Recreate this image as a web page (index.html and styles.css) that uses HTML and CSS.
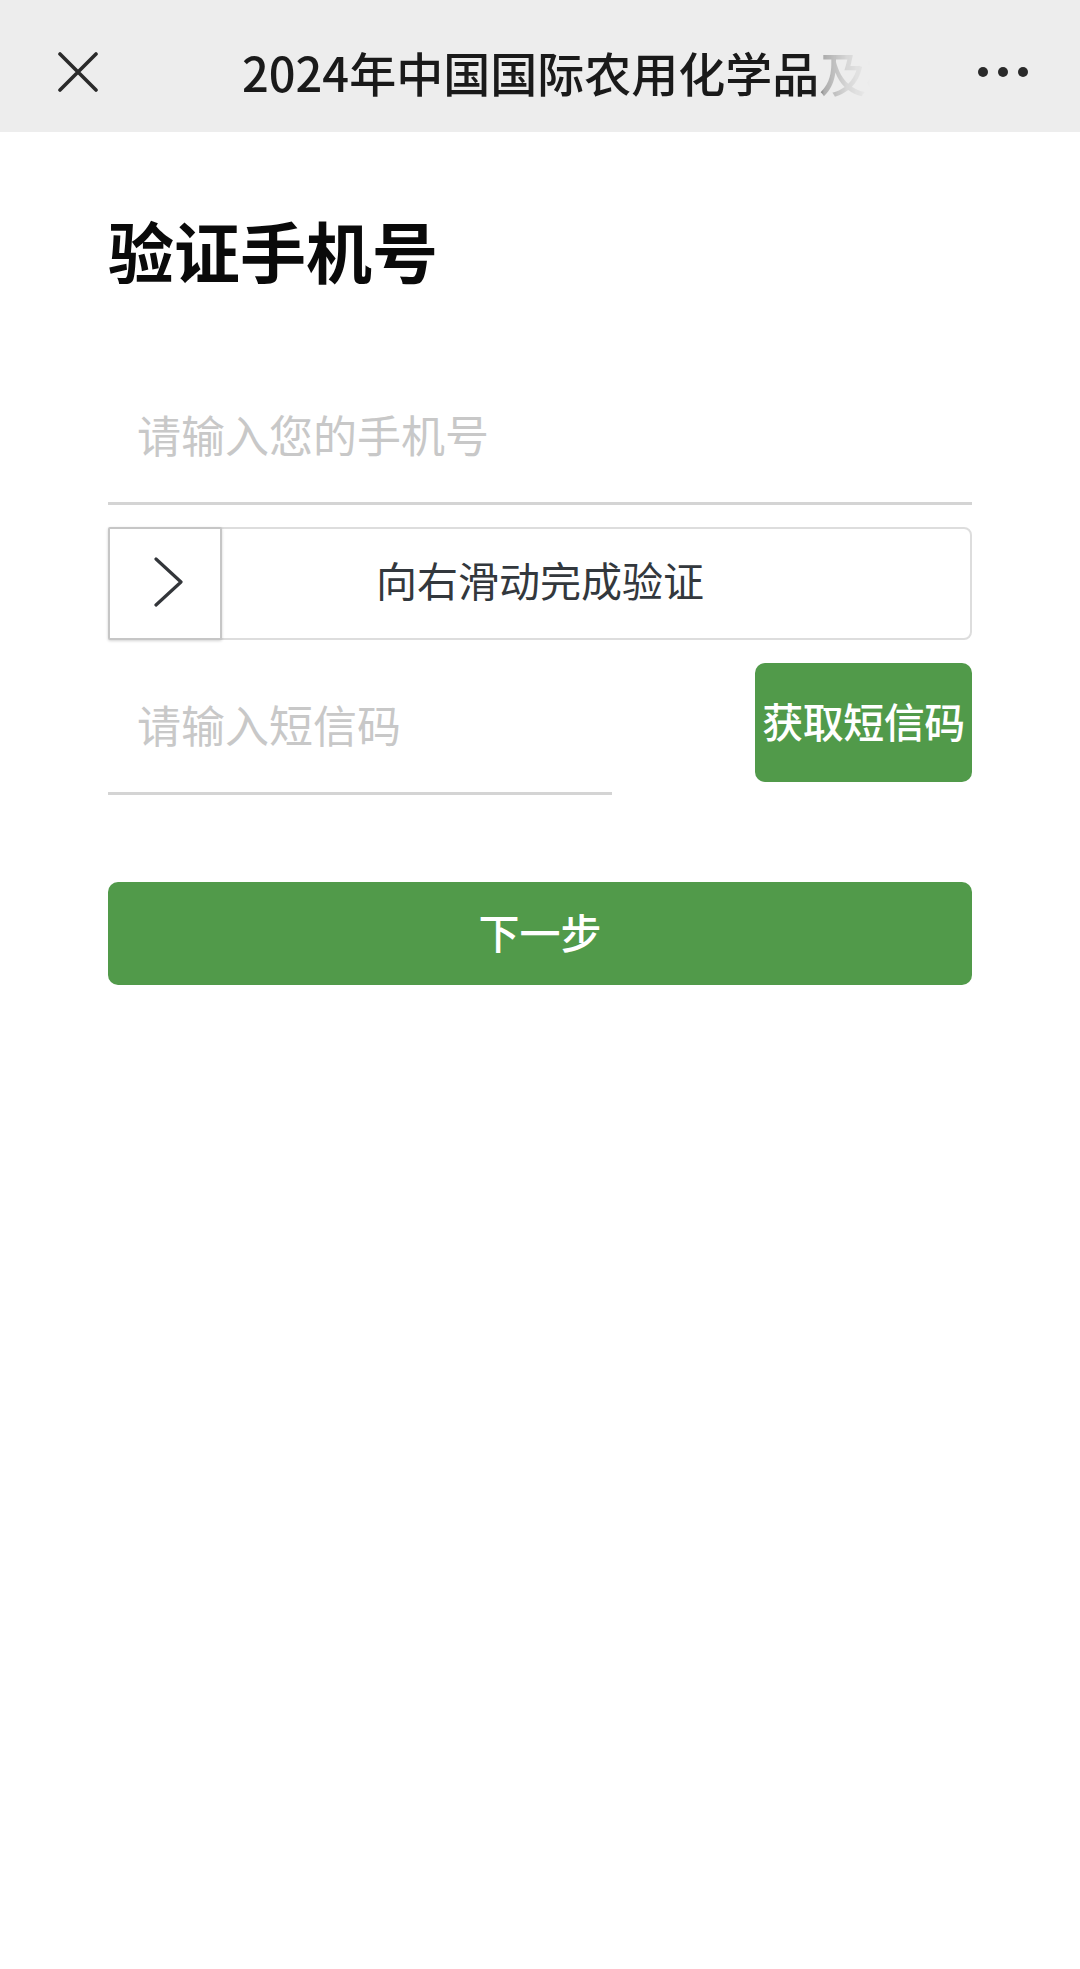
FILE: index.html
```html
<!DOCTYPE html>
<html lang="zh-CN">
<head>
<meta charset="utf-8">
<title>验证手机号</title>
<link rel="stylesheet" href="styles.css">
</head>
<body>
<header class="topbar">
  <div class="close">
    <svg width="40" height="40" viewBox="0 0 40 40"><path d="M2 2 L38 38 M38 2 L2 38" stroke="#2a2a2a" stroke-width="3.6" stroke-linecap="round" fill="none"/></svg>
  </div>
  <div class="title">2024年中国国际农用化学品及植保展览会</div>
  <div class="more"><span class="dot"></span><span class="dot"></span><span class="dot"></span></div>
</header>
<main class="content">
  <h1 class="heading">验证手机号</h1>
  <input class="field phone" type="tel" placeholder="请输入您的手机号">
  <div class="slider">
    <div class="handle">
      <svg width="30" height="50" viewBox="0 0 30 50"><path d="M2 2 L27 25 L2 48" stroke="#33363a" stroke-width="3.2" stroke-linecap="round" stroke-linejoin="round" fill="none"/></svg>
    </div>
    <div class="slider-text">向右滑动完成验证</div>
  </div>
  <div class="sms-row">
    <input class="field sms" type="text" placeholder="请输入短信码">
    <button class="btn code-btn" type="button">获取短信码</button>
  </div>
  <button class="btn next-btn" type="button">下一步</button>
</main>
</body>
</html>
```

FILE: styles.css
```css
* {
  box-sizing: border-box;
}

html, body {
  margin: 0;
  padding: 0;
  background: #ffffff;
}

body {
  width: 1080px;
  min-height: 1969px;
  font-family: "Noto Sans CJK SC", "Noto Sans", sans-serif;
  color: #111;
}

.topbar {
  height: 132px;
  padding-top: 12px;
  padding-left: 58px;
  padding-right: 52px;
  background: #ededed;
  display: flex;
  align-items: center;
}

.close {
  width: 40px;
  height: 40px;
  flex: none;
}

.close svg {
  display: block;
}

.title {
  margin-left: 144px;
  width: 628px;
  font-size: 47px;
  font-weight: 500;
  line-height: 60px;
  color: #1a1a1a;
  white-space: nowrap;
  overflow: hidden;
  -webkit-mask-image: linear-gradient(to right, #000 0, #000 572px, rgba(0,0,0,0.3) 582px, rgba(0,0,0,0.1) 605px, transparent 628px);
  mask-image: linear-gradient(to right, #000 0, #000 572px, rgba(0,0,0,0.3) 582px, rgba(0,0,0,0.1) 605px, transparent 628px);
}

.more {
  margin-left: auto;
  display: flex;
  gap: 10px;
}

.dot {
  width: 10px;
  height: 10px;
  border-radius: 50%;
  background: #2a2a2a;
}

.content {
  padding: 0 108px;
}

.heading {
  margin: 72px 0 0;
  font-size: 66px;
  font-weight: 700;
  line-height: 90px;
  color: #0a0a0a;
}

.field {
  display: block;
  height: 99px;
  margin: 0;
  padding: 0 0 40px 29px;
  border: none;
  border-bottom: 3px solid #d4d4d4;
  border-radius: 0;
  outline: none;
  background: transparent;
  font-family: inherit;
  font-size: 44px;
  line-height: 56px;
  color: #222;
}

.field::placeholder {
  color: #c8c8c8;
}

.phone {
  width: 100%;
  margin-top: 112px;
}

.slider {
  position: relative;
  margin-top: 22px;
  height: 113px;
  border: 2px solid #dddddd;
  border-radius: 8px;
  background: #fff;
}

.handle {
  position: absolute;
  left: -2px;
  top: -2px;
  width: 114px;
  height: 113px;
  border: 2px solid #c6c6c6;
  border-radius: 2px;
  background: #fff;
  box-shadow: 0 1px 3px rgba(0, 0, 0, 0.18);
  display: flex;
  align-items: center;
  justify-content: center;
  padding-left: 8px;
  padding-bottom: 4px;
}

.handle svg {
  display: block;
}

.slider-text {
  text-align: center;
  font-size: 41px;
  line-height: 101px;
  color: #33383d;
}

.sms-row {
  margin-top: 23px;
  display: flex;
  justify-content: space-between;
  align-items: flex-start;
}

.sms {
  width: 504px;
  margin-top: 33px;
}

.btn {
  border: none;
  margin: 0;
  padding: 0;
  background: #519a4a;
  color: #ffffff;
  font-family: inherit;
  font-weight: 500;
  font-size: 41px;
  cursor: pointer;
}

.code-btn {
  width: 217px;
  height: 119px;
  border-radius: 10px;
  line-height: 1;
  padding-bottom: 4px;
  white-space: nowrap;
  letter-spacing: -0.5px;
}

.next-btn {
  display: block;
  width: 100%;
  height: 103px;
  margin-top: 87px;
  border-radius: 10px;
  line-height: 1;
  padding-bottom: 4px;
}
```
